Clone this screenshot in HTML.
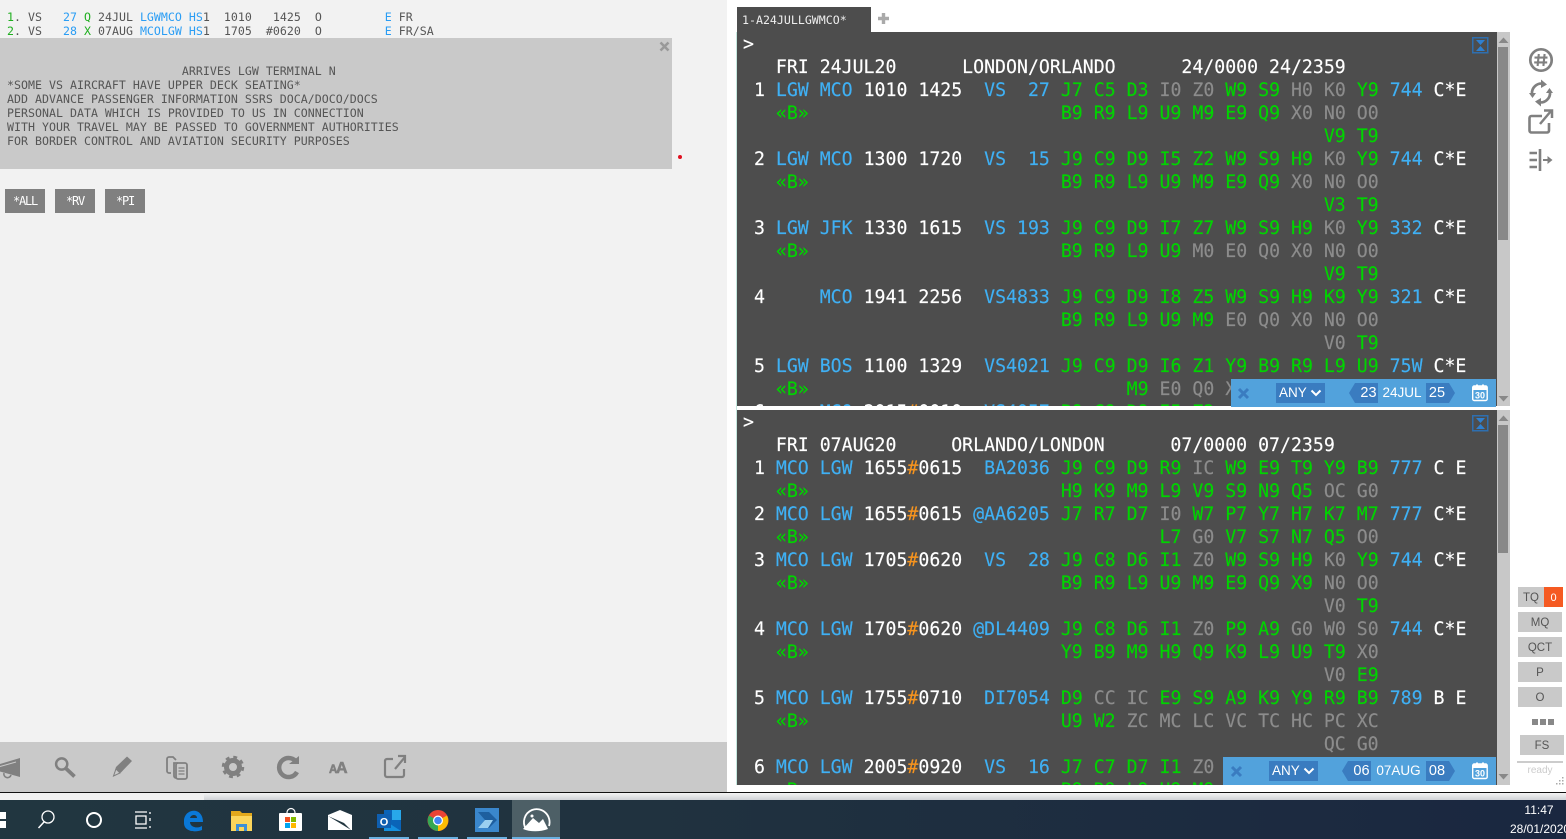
<!DOCTYPE html>
<html><head><meta charset="utf-8"><style>
html,body{margin:0;padding:0;width:1566px;height:839px;overflow:hidden;background:#fff}
.a{position:absolute}
pre{margin:0;font-family:"DejaVu Sans Mono","Liberation Mono",monospace}
.t{position:absolute;left:6px;font-size:18.22px;line-height:23px;color:#fff;-webkit-text-stroke:.15px}
.g{color:#00d400}.b{color:#3fb0f4}.n{color:#8c8c8c}.o{color:#f7941e}
.l{font-size:11.6px;line-height:14px;letter-spacing:.015px;color:#555;position:absolute;left:7px}
.l .b{color:#2a9df4}.l .g{color:#1fae1f}
.btn{position:absolute;top:189px;height:24px;background:#808080;color:#fff;font:12px/24px "DejaVu Sans Mono",monospace;letter-spacing:-1.2px;text-align:center;width:40px}
.side{position:absolute;background:#c9c9c9;color:#555;font:11.5px/22px "Liberation Sans",sans-serif;text-align:center}
.bar{position:absolute;height:28px;background:#52a2dc;color:#fff;font:14.5px/28px "Liberation Sans",sans-serif}
.bar div{position:absolute}
.sel{top:4px;height:20px;width:49px;background:#3a7cc0;line-height:20px;font-size:13.5px}
.sb{position:absolute;left:1497px;width:13px;background:#c8c8c8}
</style></head><body>
<div class="a" style="left:0;top:0;width:727px;height:742px;background:#f2f2f2"></div>
<pre class="l" style="top:10px"><span class="g">1</span>. VS   <span class="b">27</span> <span class="g">Q</span> 24JUL <span class="b">LGWMCO HS</span>1  1010   1425  O         <span class="b">E</span> FR
<span class="g">2</span>. VS   <span class="b">28</span> <span class="g">X</span> 07AUG <span class="b">MCOLGW HS</span>1  1705  #0620  O         <span class="b">E</span> FR/SA</pre>
<div class="a" style="left:0;top:38px;width:672px;height:131px;background:#c9c9c9"></div>
<pre class="l" style="top:64px">                         ARRIVES LGW TERMINAL N
*SOME VS AIRCRAFT HAVE UPPER DECK SEATING*
ADD ADVANCE PASSENGER INFORMATION SSRS DOCA/DOCO/DOCS
PERSONAL DATA WHICH IS PROVIDED TO US IN CONNECTION
WITH YOUR TRAVEL MAY BE PASSED TO GOVERNMENT AUTHORITIES
FOR BORDER CONTROL AND AVIATION SECURITY PURPOSES</pre>
<svg class="a" style="left:659px;top:41px" width="11" height="11" viewBox="0 0 11 11"><path d="M1.500 1.500L9.500 9.500M9.500 1.500L1.500 9.500" stroke="#999" stroke-width="2.600"/></svg>
<div class="a" style="left:678px;top:155px;width:4px;height:4px;border-radius:50%;background:#e01020"></div>
<div class="btn" style="left:5px">*ALL</div><div class="btn" style="left:55px">*RV</div><div class="btn" style="left:105px">*PI</div>

<div class="a" style="left:0;top:742px;width:727px;height:50px;background:#c9c9c9"></div>
<svg class="a" style="left:0;top:742px" width="420" height="50" viewBox="0 0 420 50" fill="none" stroke="#808080">
<path d="M0 22L20 16V35L0 29.500Z" fill="#808080" stroke="none"/><path d="M0 24.500L16 20" stroke="#c9c9c9" stroke-width="1"/><path d="M4 31a3.500 3.500 0 0 0 7 2" stroke-width="1.600"/>
<circle cx="61.700" cy="22" r="5.600" stroke-width="2.500"/><path d="M66 26.500L74.500 34.500" stroke-width="3.800"/>
<path d="M113 34.500L116 25L127 14.500L132 19L121 30.500Z" fill="#808080" stroke="none"/><path d="M113.500 34L116 27L120 31Z" fill="#c9c9c9" stroke="#808080" stroke-width="1"/>
<path d="M171 31h-2a2 2 0 0 1-2-2V17a2 2 0 0 1 2-2h4l3 3M176 36a2 2 0 0 1-2-2V21h4" stroke-width="1.800"/><rect x="176" y="21" width="11" height="16" rx="2" stroke-width="1.800"/><path d="M178.500 26h6M178.500 29h6M178.500 32h6" stroke-width="1.200"/>
<circle cx="233" cy="25" r="6.500" stroke-width="5"/><circle cx="233" cy="25" r="9.500" stroke-width="3.500" stroke-dasharray="3.700 3.760"/>
<path d="M297 21A9.500 9.500 0 1 0 297 30" stroke-width="4.500"/><path d="M289 22H299V14Z" fill="#808080" stroke="none"/>
<text x="329" y="31" font-family="Liberation Sans,sans-serif" font-weight="bold" font-size="11.500" fill="#808080" stroke-width=".6">A</text><text x="336" y="31" font-family="Liberation Sans,sans-serif" font-weight="bold" font-size="16" fill="#808080" stroke-width=".6">A</text>
<path d="M393 17H387a2 2 0 0 0-2 2V33a2 2 0 0 0 2 2H402a2 2 0 0 0 2-2V27" stroke-width="2.200"/><path d="M395 27L405 15M398 14H405V21" stroke-width="2.200"/>
</svg>

<!-- tab -->
<div class="a" style="left:737px;top:7px;width:134px;height:25px;background:#4d4d4d"></div>
<pre class="a" style="left:742px;top:13px;font-size:11.6px;line-height:14px;color:#eee">1-A24JULLGWMCO*</pre>
<svg class="a" style="left:877px;top:12px" width="13" height="13"><path d="M6.500 1V12M1 6.500H12" stroke="#aaa" stroke-width="3.400"/></svg>
<div class="a" style="left:736px;top:32px;width:1px;height:753px;background:#c5e8df"></div>

<!-- upper terminal -->
<div class="a" style="left:737px;top:32px;width:760px;height:374px;background:#4d4d4d;overflow:hidden">
<pre class="t" style="top:1px">&gt;
   FRI 24JUL20      LONDON/ORLANDO      24/0000 24/2359
 1 <span class="b">LGW MCO</span> 1010 1425  <span class="b">VS  27</span> <span class="g">J7 C5 D3</span> <span class="n">I0 Z0</span> <span class="g">W9 S9</span> <span class="n">H0 K0</span> <span class="g">Y9</span> <span class="b">744</span> C*E
   <span class="g">«B»</span>                       <span class="g">B9 R9 L9 U9 M9 E9 Q9</span> <span class="n">X0 N0 O0</span>
                                                     <span class="g">V9 T9</span>
 2 <span class="b">LGW MCO</span> 1300 1720  <span class="b">VS  15</span> <span class="g">J9 C9 D9 I5 Z2 W9 S9 H9</span> <span class="n">K0</span> <span class="g">Y9</span> <span class="b">744</span> C*E
   <span class="g">«B»</span>                       <span class="g">B9 R9 L9 U9 M9 E9 Q9</span> <span class="n">X0 N0 O0</span>
                                                     <span class="g">V3 T9</span>
 3 <span class="b">LGW JFK</span> 1330 1615  <span class="b">VS 193</span> <span class="g">J9 C9 D9 I7 Z7 W9 S9 H9</span> <span class="n">K0</span> <span class="g">Y9</span> <span class="b">332</span> C*E
   <span class="g">«B»</span>                       <span class="g">B9 R9 L9 U9</span> <span class="n">M0 E0 Q0 X0 N0 O0</span>
                                                     <span class="g">V9 T9</span>
 4     <span class="b">MCO</span> 1941 2256  <span class="b">VS4833</span> <span class="g">J9 C9 D9 I8 Z5 W9 S9 H9 K9 Y9</span> <span class="b">321</span> C*E
                             <span class="g">B9 R9 L9 U9 M9</span> <span class="n">E0 Q0 X0 N0 O0</span>
                                                     <span class="n">V0</span> <span class="g">T9</span>
 5 <span class="b">LGW BOS</span> 1100 1329  <span class="b">VS4021</span> <span class="g">J9 C9 D9 I6 Z1 Y9 B9 R9 L9 U9</span> <span class="b">75W</span> C*E
   <span class="g">«B»</span>                             <span class="g">M9</span> <span class="n">E0 Q0 X0</span>
 6     <span class="b">MCO</span> 2015<span class="o">#</span>0010  <span class="b">VS4057</span> <span class="g">B9 C9 D9 I5 Z2</span></pre>
</div>
<div class="sb" style="top:32px;height:374px"></div>
<div class="a" style="left:1498px;top:47px;width:10px;height:193px;background:#888"></div>
<svg class="a" style="left:1497px;top:35px" width="13" height="9"><path d="M1.500 8L6.500 2.500L11.500 8Z" fill="#888"/></svg>
<svg class="a" style="left:1497px;top:395px" width="13" height="9"><path d="M1.500 1H11.500L6.500 6.500Z" fill="#888"/></svg>
<svg class="a" style="left:1472px;top:37px" width="17" height="17"><rect x=".75" y=".75" width="15" height="15" fill="none" stroke="#2e6fb0" stroke-width="1.500"/><path d="M4 3H13L8.500 8Z M4 14H13L8.500 9Z" fill="#2f80d0"/></svg>

<!-- lower terminal -->
<div class="a" style="left:737px;top:410px;width:760px;height:375px;background:#4d4d4d;overflow:hidden">
<pre class="t" style="top:1px">&gt;
   FRI 07AUG20     ORLANDO/LONDON      07/0000 07/2359
 1 <span class="b">MCO LGW</span> 1655<span class="o">#</span>0615  <span class="b">BA2036</span> <span class="g">J9 C9 D9 R9</span> <span class="n">IC</span> <span class="g">W9 E9 T9 Y9 B9</span> <span class="b">777</span> C E
   <span class="g">«B»</span>                       <span class="g">H9 K9 M9 L9 V9 S9 N9 Q5</span> <span class="n">OC G0</span>
 2 <span class="b">MCO LGW</span> 1655<span class="o">#</span>0615 <span class="b">@AA6205</span> <span class="g">J7 R7 D7</span> <span class="n">I0</span> <span class="g">W7 P7 Y7 H7 K7 M7</span> <span class="b">777</span> C*E
   <span class="g">«B»</span>                                <span class="g">L7</span> <span class="n">G0</span> <span class="g">V7 S7 N7 Q5</span> <span class="n">O0</span>
 3 <span class="b">MCO LGW</span> 1705<span class="o">#</span>0620  <span class="b">VS  28</span> <span class="g">J9 C8 D6 I1</span> <span class="n">Z0</span> <span class="g">W9 S9 H9</span> <span class="n">K0</span> <span class="g">Y9</span> <span class="b">744</span> C*E
   <span class="g">«B»</span>                       <span class="g">B9 R9 L9 U9 M9 E9 Q9 X9</span> <span class="n">N0 O0</span>
                                                     <span class="n">V0</span> <span class="g">T9</span>
 4 <span class="b">MCO LGW</span> 1705<span class="o">#</span>0620 <span class="b">@DL4409</span> <span class="g">J9 C8 D6 I1</span> <span class="n">Z0</span> <span class="g">P9 A9</span> <span class="n">G0 W0 S0</span> <span class="b">744</span> C*E
   <span class="g">«B»</span>                       <span class="g">Y9 B9 M9 H9 Q9 K9 L9 U9 T9</span> <span class="n">X0</span>
                                                     <span class="n">V0</span> <span class="g">E9</span>
 5 <span class="b">MCO LGW</span> 1755<span class="o">#</span>0710  <span class="b">DI7054</span> <span class="g">D9</span> <span class="n">CC IC</span> <span class="g">E9 S9 A9 K9 Y9 R9 B9</span> <span class="b">789</span> B E
   <span class="g">«B»</span>                       <span class="g">U9 W2</span> <span class="n">ZC MC LC VC TC HC PC XC</span>
                                                     <span class="n">QC G0</span>
 6 <span class="b">MCO LGW</span> 2005<span class="o">#</span>0920  <span class="b">VS  16</span> <span class="g">J7 C7 D7 I1</span> <span class="n">Z0</span>
   <span class="g">«B»</span>                       <span class="g">B9 R9 L9 U9 M9</span></pre>
</div>
<div class="sb" style="top:410px;height:375px"></div>
<div class="a" style="left:1498px;top:425px;width:10px;height:128px;background:#888"></div>
<svg class="a" style="left:1497px;top:413px" width="13" height="9"><path d="M1.500 8L6.500 2.500L11.500 8Z" fill="#888"/></svg>
<svg class="a" style="left:1497px;top:773px" width="13" height="9"><path d="M1.500 1H11.500L6.500 6.500Z" fill="#888"/></svg>
<svg class="a" style="left:1472px;top:415px" width="17" height="17"><rect x=".75" y=".75" width="15" height="15" fill="none" stroke="#2e6fb0" stroke-width="1.500"/><path d="M4 3H13L8.500 8Z M4 14H13L8.500 9Z" fill="#2f80d0"/></svg>

<!-- upper bar -->
<div class="bar" style="left:1231px;top:379px;width:265px">
<svg class="a" style="left:6px;top:8px" width="13" height="13"><path d="M2 2L11 11M11 2L2 11" stroke="#3a7cc0" stroke-width="3"/></svg>
<div class="sel" style="left:45px;padding-left:3px;width:46px">ANY<svg class="a" style="left:34px;top:6px" width="12" height="8"><path d="M1.500 1.500L6 6L10.500 1.500" fill="none" stroke="#fff" stroke-width="2"/></svg></div>
<svg class="a" style="left:118px;top:4px" width="29" height="20"><path d="M6 0H29V20H6L0 10Z" fill="#3a7cc0"/></svg>
<div style="left:128px;width:19px;text-align:center">23</div>
<div style="left:150px;width:42px;text-align:center;font-size:13.500px">24JUL</div>
<svg class="a" style="left:195px;top:4px" width="29" height="20"><path d="M0 0H23L29 10L23 20H0Z" fill="#3a7cc0"/></svg>
<div style="left:196px;width:20px;text-align:center">25</div>
<svg class="a" style="left:240px;top:4px" width="18" height="19" viewBox="0 0 18 19"><rect x="1.700" y="3" width="14.500" height="14.500" rx="1.500" fill="none" stroke="#fff" stroke-width="1.400"/><rect x="1.700" y="3" width="14.500" height="4" fill="#fff"/><rect x="5" y="1.500" width="2" height="3" fill="#fff"/><rect x="11" y="1.500" width="2" height="3" fill="#fff"/><text x="9" y="15.500" text-anchor="middle" font-family="Liberation Sans,sans-serif" font-weight="bold" font-size="9" fill="#fff">30</text></svg>
</div>
<!-- lower bar -->
<div class="bar" style="left:1223px;top:757px;width:273px">
<svg class="a" style="left:7px;top:8px" width="13" height="13"><path d="M2 2L11 11M11 2L2 11" stroke="#3a7cc0" stroke-width="3"/></svg>
<div class="sel" style="left:46px;padding-left:3px;width:46px">ANY<svg class="a" style="left:34px;top:6px" width="12" height="8"><path d="M1.500 1.500L6 6L10.500 1.500" fill="none" stroke="#fff" stroke-width="2"/></svg></div>
<svg class="a" style="left:119px;top:4px" width="29" height="20"><path d="M6 0H29V20H6L0 10Z" fill="#3a7cc0"/></svg>
<div style="left:129px;width:19px;text-align:center">06</div>
<div style="left:151px;width:49px;text-align:center;font-size:13.500px">07AUG</div>
<svg class="a" style="left:203px;top:4px" width="29" height="20"><path d="M0 0H23L29 10L23 20H0Z" fill="#3a7cc0"/></svg>
<div style="left:204px;width:20px;text-align:center">08</div>
<svg class="a" style="left:248px;top:4px" width="18" height="19" viewBox="0 0 18 19"><rect x="1.700" y="3" width="14.500" height="14.500" rx="1.500" fill="none" stroke="#fff" stroke-width="1.400"/><rect x="1.700" y="3" width="14.500" height="4" fill="#fff"/><rect x="5" y="1.500" width="2" height="3" fill="#fff"/><rect x="11" y="1.500" width="2" height="3" fill="#fff"/><text x="9" y="15.500" text-anchor="middle" font-family="Liberation Sans,sans-serif" font-weight="bold" font-size="9" fill="#fff">30</text></svg>
</div>

<!-- sidebar icons -->
<svg class="a" style="left:1526px;top:45px" width="30" height="130" fill="none" stroke="#808080">
<circle cx="15" cy="15" r="10.700" stroke-width="2.700"/>
<path d="M12.800 9L11.600 21M18.600 9L17.400 21M8.500 12.600H21.500M8.200 17.400H21.200" stroke-width="2.100"/>
<path d="M6 49A9.500 9.500 0 0 1 17 38.700M24 47A9.500 9.500 0 0 1 13 57.300" stroke-width="2.700"/>
<path d="M15 34.500L21 39.500L15 43Z M15 61.500L9 56.500L15 53Z M3 48h7l-3.500 5Z M27 48h-7l3.500-5Z" fill="#808080" stroke="none"/>
<path d="M16 71H5.500a2 2 0 0 0-2 2V85.500a2 2 0 0 0 2 2H21a2 2 0 0 0 2-2V78" stroke-width="2.600"/><path d="M14 79L25 66M18 65.500H26V73" stroke-width="2.500"/>
<path d="M3.500 108H11M3.500 115H11M3.500 122H11M14 104V126" stroke-width="2.600"/><path d="M17 115H23" stroke-width="2"/><path d="M21.500 111L26.500 115L21.500 119Z" fill="#808080" stroke="none"/>
</svg>

<div class="side" style="left:1518px;top:587px;width:26px;height:20px">TQ</div>
<div class="side" style="left:1544px;top:587px;width:19px;height:20px;background:#f55a22;color:#fff;font-size:11px">0</div>
<div class="side" style="left:1518px;top:612px;width:44px;height:20px">MQ</div>
<div class="side" style="left:1518px;top:637px;width:44px;height:20px">QCT</div>
<div class="side" style="left:1518px;top:662px;width:44px;height:20px">P</div>
<div class="side" style="left:1518px;top:687px;width:44px;height:20px">O</div>
<div class="a" style="left:1532px;top:719px;width:6px;height:6px;background:#888"></div>
<div class="a" style="left:1540px;top:719px;width:6px;height:6px;background:#888"></div>
<div class="a" style="left:1548px;top:719px;width:6px;height:6px;background:#888"></div>
<div class="side" style="left:1520px;top:735px;width:44px;height:20px">FS</div>
<div class="a" style="left:1517px;top:761px;width:46px;height:2px;background:#ccc"></div>
<div class="a" style="left:1517px;top:764px;width:46px;text-align:center;font:10px/14px 'Liberation Sans',sans-serif;color:#ccc">ready</div>
<svg class="a" style="left:1553px;top:777px" width="12" height="12" fill="#aaa"><rect x="9" y="0" width="1.500" height="1.500"/><rect x="6" y="3" width="1.500" height="1.500"/><rect x="9" y="3" width="1.500" height="1.500"/><rect x="3" y="6" width="1.500" height="1.500"/><rect x="6" y="6" width="1.500" height="1.500"/><rect x="9" y="6" width="1.500" height="1.500"/></svg>

<!-- bottom strip -->
<div class="a" style="left:0;top:792px;width:1566px;height:1.500px;background:#111"></div>
<div class="a" style="left:0;top:793px;width:1566px;height:7px;background:linear-gradient(#f4f4f4,#cfd2d6)"></div>
<div class="a" style="left:0;top:793px;width:204px;height:7px;background:#f0f0f0"></div>
<div class="a" style="left:0;top:800px;width:1566px;height:39px;background:linear-gradient(90deg,#213640,#20323f 40%,#1a2740)"></div>
<div class="a" style="left:512px;top:800px;width:48px;height:39px;background:#4d5f66"></div>
<div class="a" style="left:369px;top:837px;width:40px;height:2px;background:#6ab0e0"></div>
<div class="a" style="left:418px;top:837px;width:40px;height:2px;background:#6ab0e0"></div>
<div class="a" style="left:467px;top:837px;width:40px;height:2px;background:#6ab0e0"></div>
<div class="a" style="left:512px;top:837px;width:48px;height:2px;background:#6ab0e0"></div>

<svg class="a" style="left:0;top:800px" width="560" height="39" viewBox="0 0 560 39">
<path d="M0 12H6V19H0Z M0 21H6V28H0Z" fill="#fff"/>
<circle cx="48" cy="17" r="6" fill="none" stroke="#fff" stroke-width="1.300"/><path d="M44 22L38.500 28" stroke="#fff" stroke-width="1.500"/>
<circle cx="94" cy="20" r="7" fill="none" stroke="#fff" stroke-width="2"/>
<path d="M135 12H147M135 28H147M136 16H146V24H136Z M150 12V14M150 18V21M150 26V28" fill="none" stroke="#fff" stroke-width="1.300"/>
<path d="M184 20C185 12 192 10 196 11C200 12 203 16 203 22H190C190 27 197 29 202 26V30C194 33 184 31 184 23Z M190 18H197C197 14 191 14 190 18Z" fill="#0a78d7" fill-rule="evenodd"/>
<path d="M231 11H240L242 13H252V31H231Z" fill="#e2a81c"/><path d="M231 16H252V31H231Z" fill="#fbd55c"/><path d="M236 31V24H247V31H244V27H239V31Z" fill="#3d8fd6"/>
<path d="M287 13C287 7 295 7 295 13" fill="none" stroke="#fff" stroke-width="1.200"/><rect x="279" y="13" width="23" height="18" rx="1" fill="#fff"/><rect x="285" y="17" width="5" height="5" fill="#f25022"/><rect x="291" y="17" width="5" height="5" fill="#7fba00"/><rect x="285" y="23" width="5" height="5" fill="#00a4ef"/><rect x="291" y="23" width="5" height="5" fill="#ffb900"/>
<path d="M328 15L340 10L352 15V30H328Z" fill="#fff"/><path d="M328 16L344 23L351 30L338 22Z" fill="#213640"/>
<rect x="384" y="10" width="17" height="21" fill="#0a64b8"/><path d="M392 10H401V20H392Z" fill="#28a8ea"/><path d="M384 20L401 31H384Z" fill="#1490df"/><rect x="377" y="14" width="14" height="14" fill="#0f5fb0"/><text x="384" y="25.500" text-anchor="middle" font-family="Liberation Sans,sans-serif" font-weight="bold" font-size="11" fill="#fff">O</text>
<circle cx="438" cy="20.500" r="10.500" fill="#ea4335"/><path d="M438 20.500L447 15.500A10.500 10.500 0 0 1 438 31Z" fill="#fbbc04"/><path d="M438 20.500V31A10.500 10.500 0 0 1 429 15.500Z" fill="#34a853"/><circle cx="438" cy="20.500" r="5" fill="#fff"/><circle cx="438" cy="20.500" r="3.800" fill="#4285f4"/>
<rect x="475" y="8" width="24" height="24" fill="#3a87cc"/><path d="M478 12H489L497 20L489 28H478L485 20Z" fill="#1e5f9f"/><path d="M478 28L485 20H493L488 28Z" fill="#9bd0f0"/>
<path d="M526 29A13 13 0 0 1 532 10A13 13 0 0 1 549 26" fill="none" stroke="#fff" stroke-width="1.800"/><path d="M523 29L533 18L539 23L543 19L548 29C540 32 530 32 523 29Z" fill="#fff"/><circle cx="532" cy="16" r="1.500" fill="#fff"/>
</svg>
<div class="a" style="left:1500px;top:803px;width:78px;text-align:center;font:12px/15px 'Liberation Sans',sans-serif;color:#fff">11:47</div>
<div class="a" style="left:1510px;top:822px;white-space:nowrap;font:12px/15px 'Liberation Sans',sans-serif;color:#fff">28/01/2020</div>
</body></html>
